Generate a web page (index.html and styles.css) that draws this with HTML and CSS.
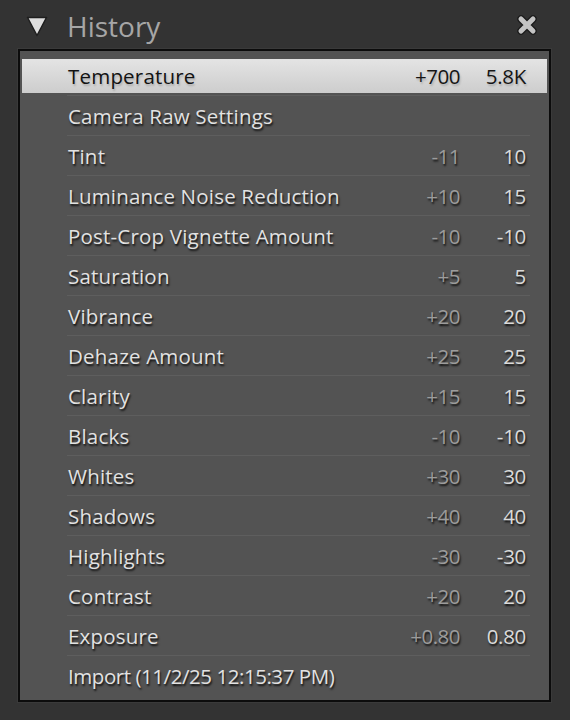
FILE: index.html
```html
<!DOCTYPE html>
<html>
<head>
<meta charset="utf-8">
<link rel="stylesheet" href="styles.css">
</head>
<body>
<div class="header">
  <svg class="tri" width="22" height="21" viewBox="0 0 22 21"><polygon points="1.5,1.5 20.5,1.5 11,19.5" fill="#dedede" stroke="#1e1e1e" stroke-width="1.5" stroke-linejoin="round"/></svg>
  <span class="title">History</span>
  <svg class="close" width="22" height="22" viewBox="0 0 22 22">
    <path d="M5 5 L17 17 M17 5 L5 17" stroke="#1c1c1c" stroke-width="7.5" stroke-linecap="round"/>
    <path d="M5 5 L17 17 M17 5 L5 17" stroke="#c4c4c4" stroke-width="5" stroke-linecap="round"/>
  </svg>
</div>
<div class="panel">
  <div class="item selected"><div class="bar"><span class="label">Temperature</span><span class="v1">+700</span><span class="v2">5.8K</span></div><div class="line"></div></div>
  <div class="item"><div class="bar"><span class="label">Camera Raw Settings</span><span class="v1"></span><span class="v2"></span></div><div class="line"></div></div>
  <div class="item"><div class="bar"><span class="label">Tint</span><span class="v1">-11</span><span class="v2">10</span></div><div class="line"></div></div>
  <div class="item"><div class="bar"><span class="label">Luminance Noise Reduction</span><span class="v1">+10</span><span class="v2">15</span></div><div class="line"></div></div>
  <div class="item"><div class="bar"><span class="label">Post-Crop Vignette Amount</span><span class="v1">-10</span><span class="v2">-10</span></div><div class="line"></div></div>
  <div class="item"><div class="bar"><span class="label">Saturation</span><span class="v1">+5</span><span class="v2">5</span></div><div class="line"></div></div>
  <div class="item"><div class="bar"><span class="label">Vibrance</span><span class="v1">+20</span><span class="v2">20</span></div><div class="line"></div></div>
  <div class="item"><div class="bar"><span class="label">Dehaze Amount</span><span class="v1">+25</span><span class="v2">25</span></div><div class="line"></div></div>
  <div class="item"><div class="bar"><span class="label">Clarity</span><span class="v1">+15</span><span class="v2">15</span></div><div class="line"></div></div>
  <div class="item"><div class="bar"><span class="label">Blacks</span><span class="v1">-10</span><span class="v2">-10</span></div><div class="line"></div></div>
  <div class="item"><div class="bar"><span class="label">Whites</span><span class="v1">+30</span><span class="v2">30</span></div><div class="line"></div></div>
  <div class="item"><div class="bar"><span class="label">Shadows</span><span class="v1">+40</span><span class="v2">40</span></div><div class="line"></div></div>
  <div class="item"><div class="bar"><span class="label">Highlights</span><span class="v1">-30</span><span class="v2">-30</span></div><div class="line"></div></div>
  <div class="item"><div class="bar"><span class="label">Contrast</span><span class="v1">+20</span><span class="v2">20</span></div><div class="line"></div></div>
  <div class="item"><div class="bar"><span class="label">Exposure</span><span class="v1">+0.80</span><span class="v2">0.80</span></div><div class="line"></div></div>
  <div class="item last"><div class="bar"><span class="label import">Import (11/2/25 12:15:37 PM)</span><span class="v1"></span><span class="v2"></span></div><div class="line"></div></div>
</div>
</body>
</html>
```
FILE: styles.css
```css
html, body {
  margin: 0;
  padding: 0;
}
body {
  background: #333333;
  width: 570px;
  height: 720px;
  font-family: "Open Sans", "Liberation Sans", sans-serif;
  overflow: hidden;
}
.header {
  height: 49px;
  display: flex;
  align-items: flex-start;
  box-sizing: border-box;
}
.tri {
  margin: 16px 0 0 26px;
  flex: none;
}
.title {
  margin: 6px 0 0 19px;
  font-size: 28px;
  line-height: 40px;
  color: #a6a6a6;
  flex: 1;
}
.close {
  margin: 14px 32px 0 0;
  flex: none;
}
.panel {
  margin-left: 18px;
  width: 533px;
  box-sizing: border-box;
  border: 2px solid #0c0c0c;
  background: #535353;
  padding: 5px 2px 4px 2px;
  box-shadow: 0 0 0 1px #3a3a3a;
}
.item {
  height: 40px;
  display: flex;
  flex-direction: column;
}
.bar {
  margin-top: 3px;
  height: 34px;
  display: grid;
  grid-template-columns: 1fr auto 70px;
  align-items: center;
  padding-left: 46px;
  padding-right: 17px;
  font-size: 20.5px;
  letter-spacing: 0.2px;
  color: #e2e2e2;
  text-shadow: 1px 2px 2px rgba(0,0,0,0.8);
}
.label {
  white-space: nowrap;
}
.import {
  letter-spacing: -0.45px;
}
.v1 {
  color: #9c9c9c;
  text-align: right;
  letter-spacing: -0.5px;
}
.v2 {
  text-align: right;
  padding-right: 4px;
  color: #dadada;
  letter-spacing: -0.3px;
}
.line {
  margin: 2px 17px 0 45px;
  height: 1px;
  background: #5e5e5e;
}
.last .line {
  background: transparent;
}
.selected .bar {
  background: linear-gradient(#e4e4e4, #d6d6d6 60%, #cdcdcd);
  color: #121212;
  text-shadow: 1px 2px 2px rgba(0,0,0,0.18);
}
.selected .v1 {
  color: #151515;
}
.selected .v2 {
  color: #151515;
}
```
